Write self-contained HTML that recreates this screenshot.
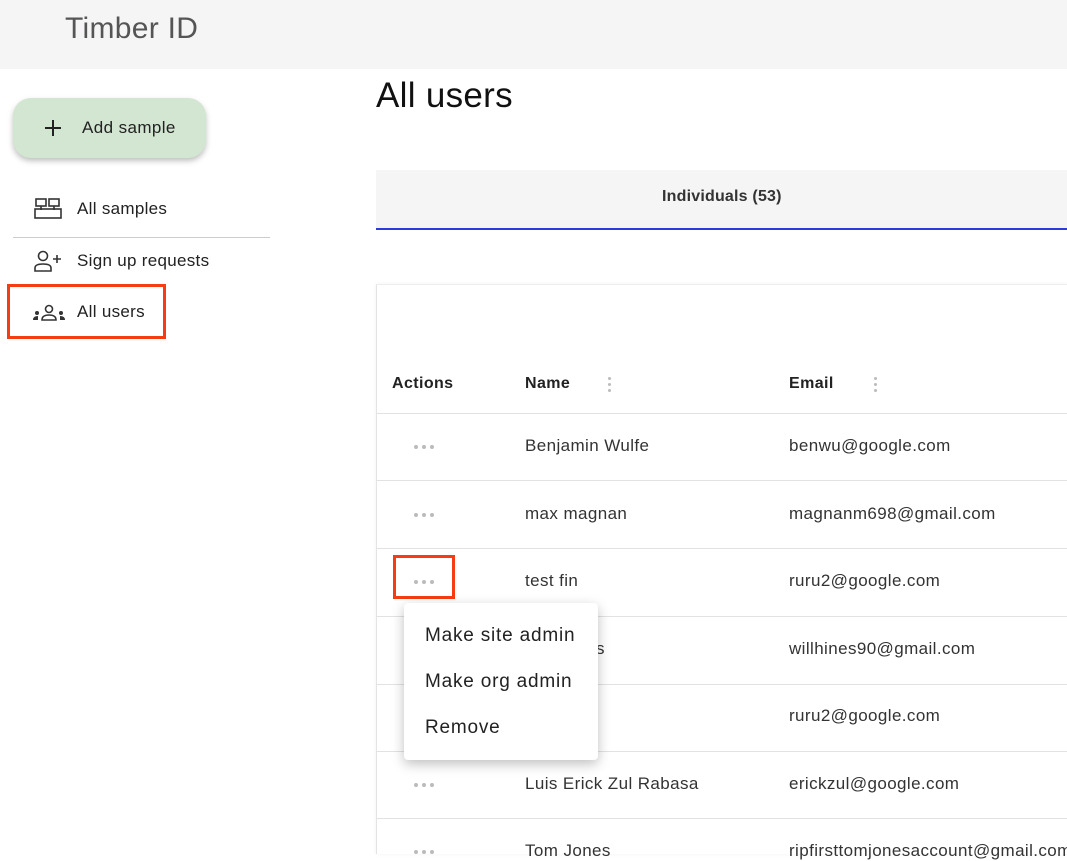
<!DOCTYPE html>
<html><head><style>
*{box-sizing:border-box;margin:0;padding:0}
body{width:1067px;height:854px;overflow:hidden;background:#fff;font-family:"Liberation Sans",Arial,sans-serif;color:#222;position:relative}
.top{position:absolute;left:0;top:0;width:1067px;height:69px;background:#f4f5f4}
.top span{position:absolute;left:65px;top:12px;font-size:30px;color:#555;letter-spacing:0.3px}
.add{position:absolute;left:13px;top:98px;width:193px;height:60px;border-radius:18px;background:#d3e6d1;box-shadow:0 3px 6px rgba(0,0,0,.25)}
.add span{position:absolute;left:69px;top:20px;font-size:17px;color:#222;letter-spacing:0.4px}
.nav{position:absolute;left:77px;font-size:17px;color:#222;letter-spacing:0.3px}
.abs{position:absolute}
.h1{position:absolute;left:376px;top:76px;font-size:35px;color:#111;letter-spacing:0.3px}
.tabs{position:absolute;left:376px;top:170px;width:691px;height:60px;background:#f4f5f4;border-bottom:2px solid #2a3bdc}
.tabs span{position:absolute;left:286px;top:18px;font-size:16px;font-weight:bold;color:#333;letter-spacing:0.2px}
.card{position:absolute;left:376px;top:284px;width:691px;height:570px;border-left:1px solid #e4e4e4;border-top:1px solid #eee;box-shadow:0 0 4px rgba(0,0,0,.06)}
.hdr{position:absolute;top:375px;font-size:16px;font-weight:bold;color:#222;letter-spacing:0.4px}
.line{position:absolute;left:377px;width:690px;height:1px;background:#e2e2e2}
.cell{position:absolute;font-size:17px;color:#333;letter-spacing:0.4px}
.dots{position:absolute;left:414px;width:22px;height:4px}
.dots::before{content:"";position:absolute;left:0;top:0;width:4px;height:4px;border-radius:50%;background:#bbb;box-shadow:8px 0 0 #bbb,16px 0 0 #bbb}
.kebab{position:absolute;width:3px;height:3px;border-radius:50%;background:#bbb;box-shadow:0 6px 0 #bbb,0 12px 0 #bbb}
.menu{position:absolute;left:404px;top:603px;width:194px;height:157px;background:#fff;border-radius:4px;box-shadow:0 4px 12px rgba(0,0,0,.25)}
.menu div{position:absolute;left:21px;font-size:19px;color:#222;letter-spacing:0.8px}
.red{position:absolute;border:3px solid #f53c12}
</style></head><body>
<div class="top"><span>Timber ID</span></div>
<div class="add"><svg class="abs" style="left:30px;top:20px" width="20" height="20"><path d="M10 2v16M2 10h16" stroke="#222" stroke-width="2"/></svg><span>Add sample</span></div>
<svg class="abs" style="left:34px;top:197px" width="30" height="24" fill="none" stroke="#333" stroke-width="1.6"><rect x="2" y="2" width="10" height="7"/><rect x="15" y="2" width="10" height="7"/><path d="M7 9v4M20 9v4"/><rect x="1" y="12" width="26" height="9"/></svg>
<div class="nav" style="top:199px">All samples</div>
<div class="abs" style="left:13px;top:237px;width:257px;height:1px;background:#ccc"></div>
<svg class="abs" style="left:33px;top:249px" width="32" height="24" fill="none" stroke="#333" stroke-width="1.6"><circle cx="10" cy="7" r="4.5"/><path d="M2 22v-3q0-4 8-4t8 4v3z"/><path d="M20 10h8M24 6v8"/></svg>
<div class="nav" style="top:251px">Sign up requests</div>
<svg class="abs" style="left:32px;top:304px" width="34" height="18" fill="#333"><circle cx="17" cy="5" r="3.5" fill="none" stroke="#333" stroke-width="1.6"/><path d="M10 16q0-5 7-5t7 5z" fill="none" stroke="#333" stroke-width="1.6"/><circle cx="5" cy="9" r="2"/><path d="M1 16q0-4 5-4v4z"/><circle cx="29" cy="9" r="2"/><path d="M33 16q0-4-5-4v4z"/></svg>
<div class="nav" style="top:302px">All users</div>
<div class="red" style="left:7px;top:284px;width:159px;height:55px"></div>
<div class="h1">All users</div>
<div class="tabs"><span>Individuals (53)</span></div>
<div class="card"></div>
<div class="hdr" style="left:392px">Actions</div>
<div class="hdr" style="left:525px">Name</div>
<div class="kebab" style="left:608px;top:377px"></div>
<div class="hdr" style="left:789px">Email</div>
<div class="kebab" style="left:874px;top:377px"></div>
<div class="line" style="top:413px"></div>
<div class="line" style="top:480px"></div>
<div class="line" style="top:548px"></div>
<div class="line" style="top:616px"></div>
<div class="line" style="top:684px"></div>
<div class="line" style="top:751px"></div>
<div class="line" style="top:818px"></div>
<div class="dots" style="top:445px"></div><div class="cell" style="left:525px;top:436px">Benjamin Wulfe</div><div class="cell" style="left:789px;top:436px">benwu@google.com</div>
<div class="dots" style="top:513px"></div><div class="cell" style="left:525px;top:504px">max magnan</div><div class="cell" style="left:789px;top:504px">magnanm698@gmail.com</div>
<div class="dots" style="top:580px"></div><div class="cell" style="left:525px;top:571px">test fin</div><div class="cell" style="left:789px;top:571px">ruru2@google.com</div>
<div class="cell" style="left:596px;top:639px">s</div><div class="cell" style="left:789px;top:639px">willhines90@gmail.com</div>
<div class="cell" style="left:789px;top:706px">ruru2@google.com</div>
<div class="dots" style="top:783px"></div><div class="cell" style="left:525px;top:774px">Luis Erick Zul Rabasa</div><div class="cell" style="left:789px;top:774px">erickzul@google.com</div>
<div class="dots" style="top:850px"></div><div class="cell" style="left:525px;top:841px">Tom Jones</div><div class="cell" style="left:789px;top:841px">ripfirsttomjonesaccount@gmail.com</div>
<div class="red" style="left:393px;top:555px;width:62px;height:44px"></div>
<div class="menu"><div style="top:22px">Make site admin</div><div style="top:68px">Make org admin</div><div style="top:114px">Remove</div></div>
</body></html>
